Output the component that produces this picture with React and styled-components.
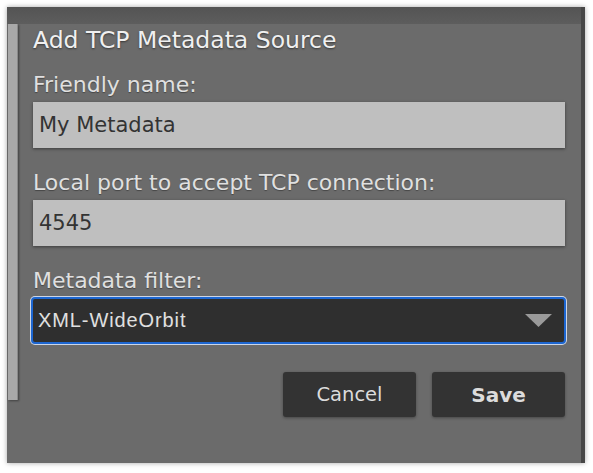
import React from "react";
import styled, { createGlobalStyle } from "styled-components";

const Global = createGlobalStyle`
  html, body { margin: 0; padding: 0; background: #fff; }
  body { width: 593px; height: 473px; overflow: hidden; }
`;

const Dialog = styled.div`
  margin: 7px 0 0 7px;
  width: 578px;
  height: 456px;
  box-sizing: border-box;
  background: #6b6b6b;
  border-right: 4px solid #474747;
  box-shadow: 0 0 5px rgba(0, 0, 0, 0.35);
  display: flex;
  flex-direction: column;
`;

const TopBand = styled.div`
  height: 17px;
  background: linear-gradient(#545454, #5d5d5d);
  flex: none;
`;

const Body = styled.div`
  display: flex;
  flex: 1;
`;

const SideStrip = styled.div`
  width: 9px;
  margin-left: 1px;
  height: 376px;
  background: #a9a9a9;
  border-right: 1px solid #8a8a8a;
  box-shadow: 1px 1px 2px rgba(0, 0, 0, 0.4);
  flex: none;
`;

const Content = styled.div`
  flex: 1;
  padding: 2px 16px 0 15px;
  display: flex;
  flex-direction: column;
  font-family: "DejaVu Sans", Verdana, sans-serif;
`;

const Title = styled.div`
  font-size: 23.5px;
  color: #f0f0f0;
  text-shadow: 0 1px 2px rgba(0, 0, 0, 0.5);
  line-height: 28px;
  margin-bottom: 19px;
`;

const Label = styled.div`
  font-size: 22px;
  color: #e0e0e0;
  text-shadow: 0 1px 1px rgba(0, 0, 0, 0.35);
  line-height: 24px;
  margin-bottom: ${(p) => p.$gap}px;
`;

const TextBox = styled.div`
  height: 46px;
  background: #bfbfbf;
  box-shadow: 0 1px 3px rgba(0, 0, 0, 0.45);
  display: flex;
  align-items: center;
  padding-left: 6px;
  font-size: 21px;
  color: #333;
  margin-bottom: 23px;
`;

const Select = styled.div`
  margin: 0 -1px 0 -2px;
  height: 47px;
  box-sizing: border-box;
  background: #2f2f2f;
  border: 2px solid #1d66d0;
  border-radius: 4px;
  box-shadow: 0 0 0 1px #cdd6e6;
  display: flex;
  align-items: center;
  justify-content: space-between;
  padding: 0 12px 0 5px;
  font-family: "Liberation Sans", Arial, sans-serif;
  font-size: 20px;
  letter-spacing: 0.9px;
  color: #e0e0e0;
`;

const Actions = styled.div`
  display: flex;
  justify-content: flex-end;
  gap: 16px;
  margin-top: 28px;
`;

const Button = styled.div`
  width: 133px;
  height: 45px;
  background: #333;
  border-radius: 3px;
  box-shadow: 0 1px 3px rgba(0, 0, 0, 0.35);
  display: flex;
  align-items: center;
  justify-content: center;
  font-size: ${(p) => (p.$primary ? 20 : 19.5)}px;
  font-weight: ${(p) => (p.$primary ? 700 : 400)};
  color: #dcdcdc;
`;

export default function App() {
  return (
    <>
      <Global />
      <Dialog>
        <TopBand />
        <Body>
          <SideStrip />
          <Content>
            <Title>Add TCP Metadata Source</Title>
            <Label $gap={5}>Friendly name:</Label>
            <TextBox>My Metadata</TextBox>
            <Label $gap={5}>Local port to accept TCP connection:</Label>
            <TextBox>4545</TextBox>
            <Label $gap={4}>Metadata filter:</Label>
            <Select>
              <span>XML-WideOrbit</span>
              <svg width="27" height="15" viewBox="0 0 27 15">
                <polygon points="0,1 27,1 13.5,14" fill="#9a9a9a" />
              </svg>
            </Select>
            <Actions>
              <Button>Cancel</Button>
              <Button $primary>Save</Button>
            </Actions>
          </Content>
        </Body>
      </Dialog>
    </>
  );
}
